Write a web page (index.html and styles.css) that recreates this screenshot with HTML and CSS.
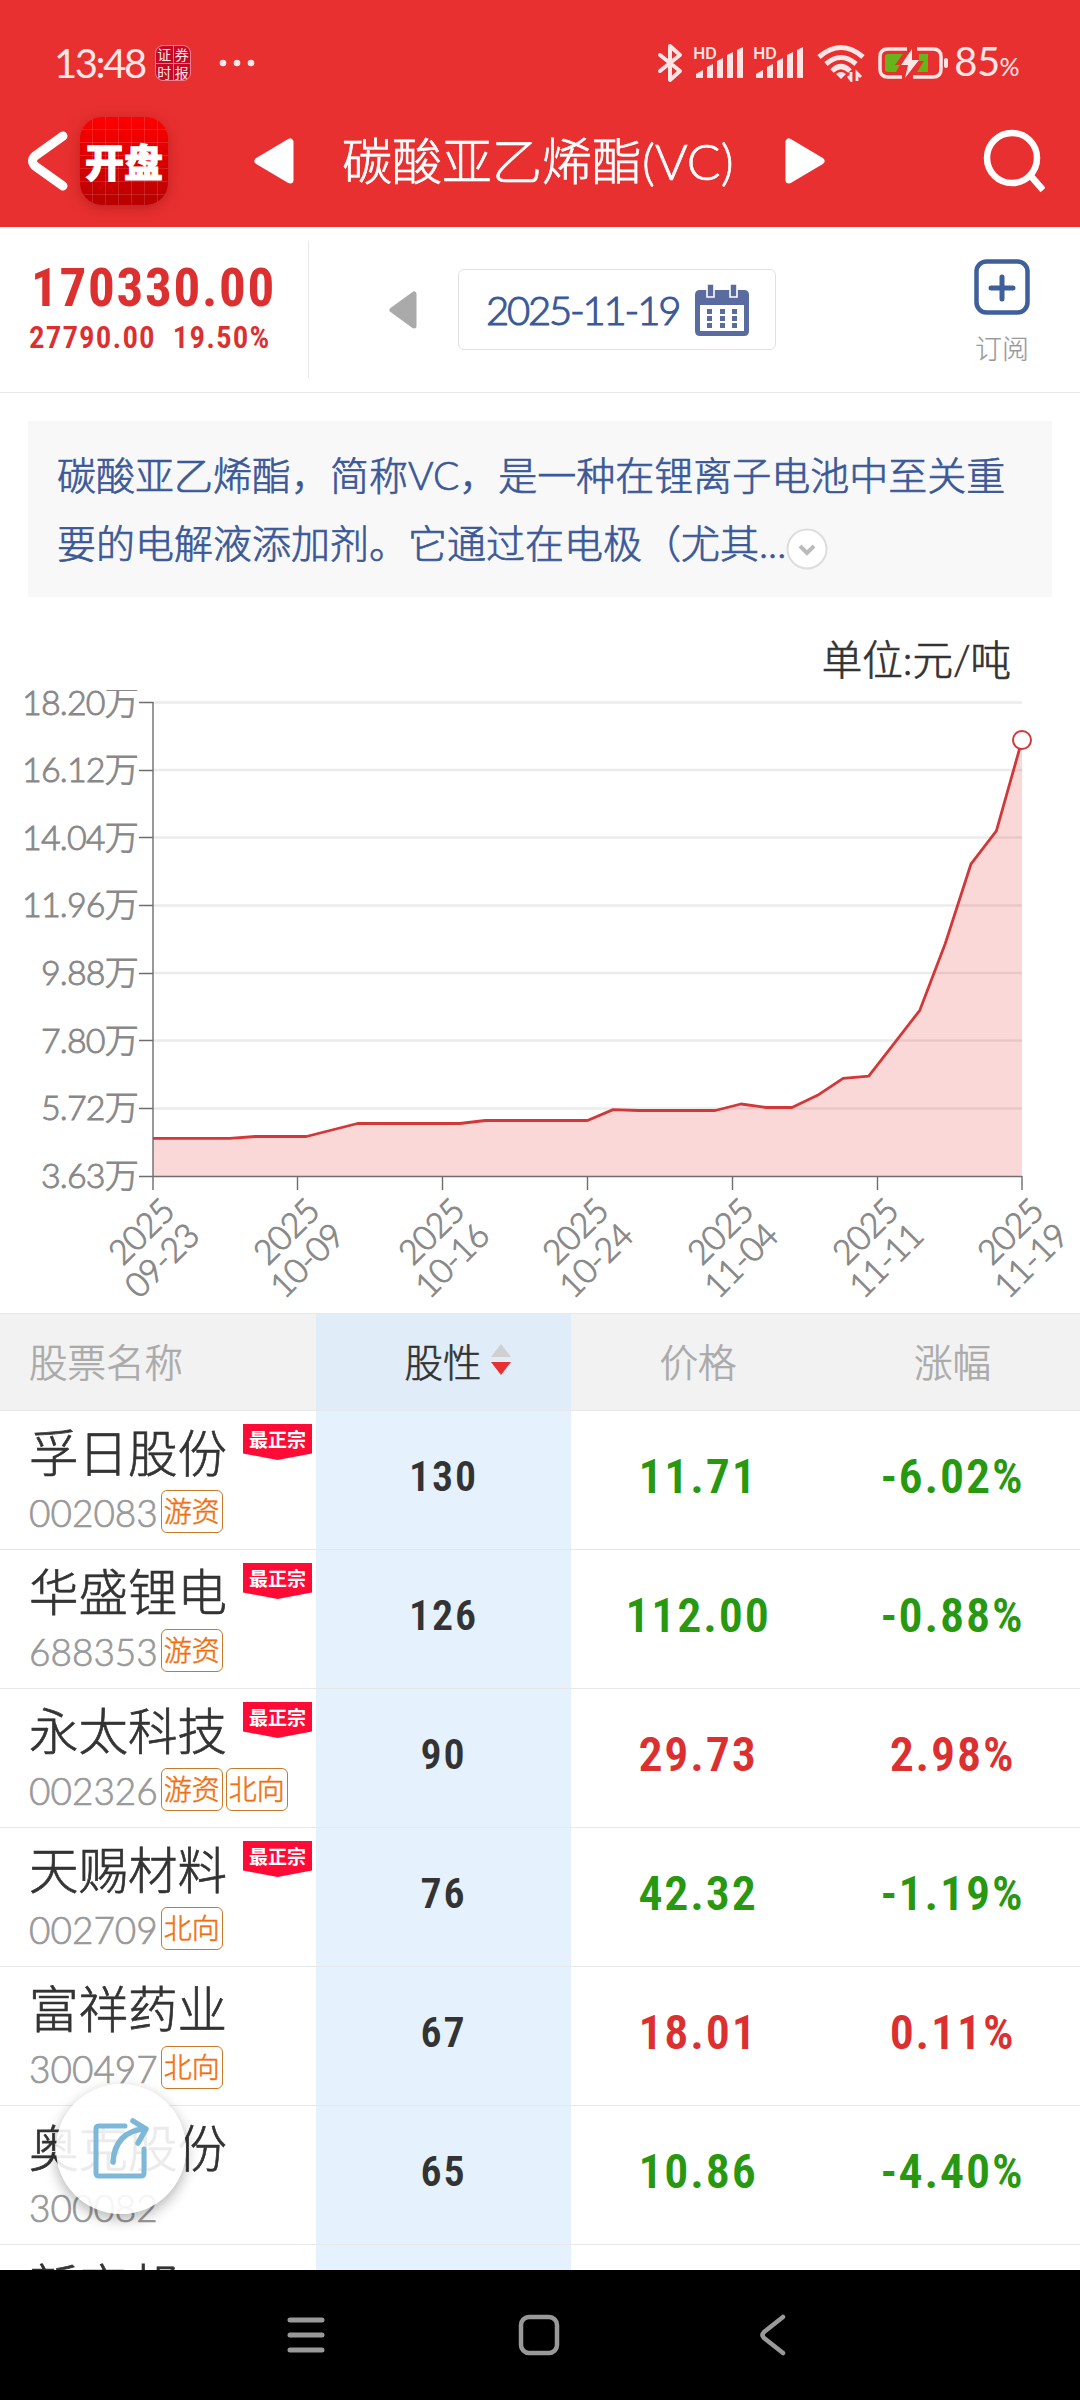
FILE: index.html
```
<!DOCTYPE html>
<html lang="zh-CN">
  <head>
    <meta charset="UTF-8" />
    <title>碳酸亚乙烯酯(VC)</title>
    <link rel="stylesheet" href="styles.css">
  </head>
  <body>
    <div class="screen">
      <header class="top">
        <!-- 状态栏 -->
        <div class="status">
          <span class="clock">13:48</span>
          <div class="news-icon"><span>证</span><span>券</span><span>时</span><span>报</span></div>
          <svg class="dots" width="36" height="8" viewBox="0 0 36 8" fill="#ffe6e6">
            <circle cx="4" cy="4" r="3.3" /><circle cx="18" cy="4" r="3.3" /><circle cx="32" cy="4" r="3.3" />
          </svg>
          <div class="status-right">
            <svg width="26" height="40" viewBox="0 0 26 40" fill="none" stroke="#ffe6e6" stroke-width="4" stroke-linejoin="round" stroke-linecap="round">
              <path d="M3 12L23 28L13 37V3L23 12L3 28" />
            </svg>
            <div class="signal">
              <span>HD</span>
              <svg width="48" height="32" viewBox="0 0 48 32" fill="#ffe6e6">
                <path d="M0 31V27L7 23V31ZM11 31V20L17 17V31ZM21 31V14L27 11V31ZM31 31V8L37 5V31ZM41 31V3L47 0V31Z" />
              </svg>
            </div>
            <div class="signal">
              <span>HD</span>
              <svg width="48" height="32" viewBox="0 0 48 32" fill="#ffe6e6">
                <path d="M0 31V27L7 23V31ZM11 31V20L17 17V31ZM21 31V14L27 11V31ZM31 31V8L37 5V31ZM41 31V3L47 0V31Z" />
              </svg>
            </div>
            <svg class="wifi" width="48" height="38" viewBox="0 0 48 38" fill="none" stroke="#ffe6e6" stroke-width="5">
              <path d="M2 13Q24 -6 46 13M9 20Q24 7 39 20M15 27Q24 18 33 27" />
              <path d="M19 30Q24 26 29 30L24 35Z" fill="#ffe6e6" stroke="none" />
              <path d="M34 28V36L31 32M40 37V29L44 33" stroke-width="2.8" />
            </svg>
            <svg class="battery" width="72" height="34" viewBox="0 0 72 34">
              <path d="M29 3H10Q2 3 2 11V23Q2 31 10 31H24M39 3H55Q63 3 63 11V23Q63 31 55 31H35" fill="none" stroke="#ffe6e6" stroke-width="3.5" />
              <path d="M7 11Q7 8 10 8H25L17 19H22L18 26H10Q7 26 7 23ZM41 8H50V26H39L46 15H41Z" fill="#66b31a" />
              <path d="M34 3L23 19H30L27 32L41 14H34Z" fill="#ffe6e6" />
              <rect x="66" y="12" width="4" height="10" rx="2" fill="#ffe6e6" />
            </svg>
            <span class="percent">85<small>%</small></span>
          </div>
        </div>
        <!-- 标题栏 -->
        <div class="titlebar">
          <svg class="back" width="42" height="62" viewBox="0 0 42 62" fill="none" stroke="#fff" stroke-width="9" stroke-linecap="round" stroke-linejoin="round">
            <path d="M36 6L8 26Q3 31 8 36L36 56" />
          </svg>
          <div class="app-logo">开盘</div>
          <svg class="prev" width="40" height="48" viewBox="0 0 40 48" fill="#fff" stroke="#fff" stroke-width="7" stroke-linejoin="round"><path d="M36 5V43L4 24Z" /></svg>
          <h1>碳酸亚乙烯酯(VC)</h1>
          <svg class="next" width="40" height="48" viewBox="0 0 40 48" fill="#fff" stroke="#fff" stroke-width="7" stroke-linejoin="round"><path d="M4 5V43L36 24Z" /></svg>
          <svg class="search" width="62" height="66" viewBox="0 0 62 66" fill="none" stroke="#fff" stroke-width="6.5">
            <circle cx="29" cy="30" r="25" /><path d="M47 47L60 62" />
          </svg>
        </div>
      </header>

      <main>
        <section class="summary">
          <div class="quote">
            <div class="price">170330.00</div>
            <div class="change"><span>27790.00</span><span>19.50%</span></div>
          </div>
          <svg class="day-prev" width="28" height="38" viewBox="0 0 28 38" fill="#aaa" stroke="#aaa" stroke-width="5" stroke-linejoin="round"><path d="M25 3V35L3 19Z" /></svg>
          <div class="date">
            <span>2025-11-19</span>
            <svg width="54" height="52" viewBox="0 0 54 52" fill="#5a6b9f">
              <path fill-rule="evenodd" d="M5 6H49Q54 6 54 11V47Q54 52 49 52H5Q0 52 0 47V11Q0 6 5 6ZM5 21V47H49V21Z" />
              <path d="M12 0H19V13H12ZM35 0H42V13H35Z" stroke="#fff" stroke-width="1.6" />
              <path d="M12 25h5v5h-5zM25 25h5v5h-5zM37 25h5v5h-5zM12 32h5v5h-5zM25 32h5v5h-5zM37 32h5v5h-5zM12 39h5v5h-5zM25 39h5v5h-5zM37 39h5v5h-5z" />
            </svg>
          </div>
          <div class="subscribe">
            <svg width="56" height="56" viewBox="0 0 56 56" fill="none" stroke="#3f5f9b" stroke-width="4.5" stroke-linecap="round">
              <rect x="2.5" y="2.5" width="51" height="51" rx="10" /><path d="M28 18V40M17 29H39" stroke-width="5" />
            </svg>
            <span>订阅</span>
          </div>
        </section>

        <p class="intro">碳酸亚乙烯酯，简称VC，是一种在锂离子电池中至关重<br />要的电解液添加剂。它通过在电极（尤其...<svg width="42" height="42" viewBox="0 0 42 42" fill="none"><circle cx="21" cy="21" r="19.5" fill="#fff" stroke="#ddd" stroke-width="2" /><path d="M14 18L21 25L28 18" stroke="#bbb" stroke-width="4" /></svg></p>

        <div class="unit">单位:元/吨</div>

        <!-- 价格走势 -->
        <svg class="chart" width="1080" height="623" viewBox="0 690 1080 623">
          <path d="M153 702.5H1022M153 770H1022M153 837.5H1022M153 905.5H1022M153 973H1022M153 1040.5H1022M153 1108.5H1022" stroke="#ebebeb" stroke-width="2.5" />
          <path d="M153 1138.3H229.7L255.2 1136.5H306.4L331.9 1130L357.5 1123.5H459.7L485.3 1120.5H587.5L613.1 1109.6L638.6 1110.5H715.3L740.9 1104L766.4 1107.5H792L817.5 1095.3L843.1 1078.4L868.7 1076.2L894.2 1043.3L919.8 1010.3L945.3 943.5L970.9 864.2L996.4 830.8L1022 740.2V1176H153Z" fill="#e83030" fill-opacity=".19" />
          <path d="M153 702V1190M139 1176.5H1022M139 702.5H153M139 770.5H153M139 837.5H153M139 905.5H153M139 973.5H153M139 1040.5H153M139 1108.5H153M297.5 1176V1190M442.5 1176V1190M587.5 1176V1190M732.5 1176V1190M877.5 1176V1190M1022 1176V1190" stroke="#6e6e6e" stroke-width="1.4" />
          <path d="M153 1138.3H229.7L255.2 1136.5H306.4L331.9 1130L357.5 1123.5H459.7L485.3 1120.5H587.5L613.1 1109.6L638.6 1110.5H715.3L740.9 1104L766.4 1107.5H792L817.5 1095.3L843.1 1078.4L868.7 1076.2L894.2 1043.3L919.8 1010.3L945.3 943.5L970.9 864.2L996.4 830.8L1022 740.2" fill="none" stroke="#d23838" stroke-width="2.8" stroke-linejoin="round" />
          <circle cx="1022" cy="740" r="9" fill="#fff" stroke="#d23838" stroke-width="2" />
          <g class="y-labels">
            <text x="138" y="715">18.20万</text>
            <text x="138" y="782">16.12万</text>
            <text x="138" y="850">14.04万</text>
            <text x="138" y="917">11.96万</text>
            <text x="138" y="985">9.88万</text>
            <text x="138" y="1053">7.80万</text>
            <text x="138" y="1120">5.72万</text>
            <text x="138" y="1188">3.63万</text>
          </g>
          <g class="x-labels">
            <text transform="translate(153 1190) rotate(-45)"><tspan x="0" y="33">2025</tspan><tspan x="0" y="68">09-23</tspan></text>
            <text transform="translate(298 1190) rotate(-45)"><tspan x="0" y="33">2025</tspan><tspan x="0" y="68">10-09</tspan></text>
            <text transform="translate(443 1190) rotate(-45)"><tspan x="0" y="33">2025</tspan><tspan x="0" y="68">10-16</tspan></text>
            <text transform="translate(587 1190) rotate(-45)"><tspan x="0" y="33">2025</tspan><tspan x="0" y="68">10-24</tspan></text>
            <text transform="translate(732 1190) rotate(-45)"><tspan x="0" y="33">2025</tspan><tspan x="0" y="68">11-04</tspan></text>
            <text transform="translate(877 1190) rotate(-45)"><tspan x="0" y="33">2025</tspan><tspan x="0" y="68">11-11</tspan></text>
            <text transform="translate(1022 1190) rotate(-45)"><tspan x="0" y="33">2025</tspan><tspan x="0" y="68">11-19</tspan></text>
          </g>
        </svg>

        <!-- 相关股票 -->
        <div class="table">
          <div class="row head">
            <div class="stock">股票名称</div>
            <div class="nature">股性<svg width="22" height="32" viewBox="0 0 22 32"><path d="M11 0L21 13H1Z" fill="#d0d0d0" /><path d="M1 18H21L11 31Z" fill="#e83030" /></svg></div>
            <div class="value">价格</div>
            <div class="value">涨幅</div>
          </div>
          <div class="row">
            <div class="stock"><div class="name">孚日股份</div><div class="code">002083<i>游资</i></div><b class="badge">最正宗</b></div>
            <div class="nature">130</div>
            <div class="value down">11.71</div>
            <div class="value down">-6.02%</div>
          </div>
          <div class="row">
            <div class="stock"><div class="name">华盛锂电</div><div class="code">688353<i>游资</i></div><b class="badge">最正宗</b></div>
            <div class="nature">126</div>
            <div class="value down">112.00</div>
            <div class="value down">-0.88%</div>
          </div>
          <div class="row">
            <div class="stock"><div class="name">永太科技</div><div class="code">002326<i>游资</i><i>北向</i></div><b class="badge">最正宗</b></div>
            <div class="nature">90</div>
            <div class="value up">29.73</div>
            <div class="value up">2.98%</div>
          </div>
          <div class="row">
            <div class="stock"><div class="name">天赐材料</div><div class="code">002709<i>北向</i></div><b class="badge">最正宗</b></div>
            <div class="nature">76</div>
            <div class="value down">42.32</div>
            <div class="value down">-1.19%</div>
          </div>
          <div class="row">
            <div class="stock"><div class="name">富祥药业</div><div class="code">300497<i>北向</i></div></div>
            <div class="nature">67</div>
            <div class="value up">18.01</div>
            <div class="value up">0.11%</div>
          </div>
          <div class="row">
            <div class="stock"><div class="name">奥克股份</div><div class="code">300082</div></div>
            <div class="nature">65</div>
            <div class="value down">10.86</div>
            <div class="value down">-4.40%</div>
          </div>
          <div class="row">
            <div class="stock"><div class="name">新宙邦</div></div>
            <div class="nature"></div>
            <div class="value"></div>
            <div class="value"></div>
          </div>
        </div>
      </main>

      <!-- 分享悬浮按钮 -->
      <div class="share">
        <svg width="60" height="64" viewBox="0 0 60 64" fill="none" stroke="#7db8d8" stroke-width="5" stroke-linecap="round" stroke-linejoin="round">
          <path d="M34 9H8Q5 9 5 12V56Q5 59 8 59H50Q53 59 53 56V32" />
          <path d="M22 45C23 26 34 13 54 12M42 4L55 12L47 26" stroke-width="5.5" />
        </svg>
      </div>

      <nav class="sysbar">
        <svg width="38" height="40" viewBox="0 0 38 40" stroke="#999" stroke-width="5" stroke-linecap="round"><path d="M3 5H35M3 20H35M3 35H35" /></svg>
        <svg width="42" height="42" viewBox="0 0 42 42" fill="none" stroke="#999" stroke-width="4.5"><rect x="3" y="3" width="36" height="36" rx="8" /></svg>
        <svg width="28" height="42" viewBox="0 0 28 42" fill="none" stroke="#999" stroke-width="4.5" stroke-linecap="round" stroke-linejoin="round"><path d="M24 3L5 18Q2 21 5 24L24 39" /></svg>
      </nav>
    </div>
  </body>
</html>
```
FILE: styles.css
```
* {
  box-sizing: border-box;
}

body {
  margin: 0;
  background: #fff;
  font-family: Lato, "Noto Sans CJK SC", sans-serif;
  font-weight: 300;
  color: #333;
  -webkit-text-stroke: 0.7px;
}

svg {
  display: block;
  flex: none;
}

.screen {
  position: relative;
  display: flex;
  flex-direction: column;
  width: 1080px;
  height: 2400px;
  overflow: hidden;
}

/* 顶部 */
.top {
  flex: none;
  height: 227px;
  background: #e83030;
  color: #fff;
}

.status {
  display: flex;
  align-items: center;
  height: 104px;
  padding: 22px 61px 0 54px;
  color: #ffe6e6;
}

.clock,
.percent {
  font-size: 40px;
  font-weight: 400;
  line-height: 40px;
  -webkit-text-stroke: 0;
}

.clock {
  width: 101px;
  letter-spacing: -2.4px;
}

.news-icon {
  display: grid;
  grid-template-columns: 1fr 1fr;
  gap: 1px;
  width: 36px;
  height: 36px;
  border: 1px solid #e9808f;
  border-radius: 8px;
  background: #e9808f;
  overflow: hidden;
}

.news-icon span {
  background: #c40828;
  font: 400 14px/17px "Noto Sans CJK SC", sans-serif;
  text-align: center;
  -webkit-text-stroke: 0;
}

.dots {
  margin-left: 28px;
}

.status-right {
  display: flex;
  align-items: center;
  margin-left: auto;
}

.signal {
  position: relative;
  width: 49px;
  margin-left: 13px;
}

.signal + .signal {
  margin-left: 11px;
}

.signal span {
  position: absolute;
  left: -3px;
  top: -2px;
  font: 600 16px/16px Inter, sans-serif;
  -webkit-text-stroke: 0;
}

.wifi {
  margin-left: 12px;
}

.battery {
  margin-left: 13px;
}

.percent {
  margin-left: 4px;
  letter-spacing: -0.6px;
}

.percent small {
  font-size: 25px;
}

.titlebar {
  display: flex;
  align-items: center;
  height: 114px;
  padding-left: 27px;
}

.app-logo {
  display: flex;
  align-items: center;
  justify-content: center;
  width: 88px;
  height: 88px;
  margin-left: 11px;
  padding-bottom: 3px;
  border-radius: 22px;
  background:
    repeating-linear-gradient(90deg, transparent 0 12px, rgba(255, 255, 255, 0.13) 12px 13px),
    repeating-linear-gradient(transparent 0 12px, rgba(255, 255, 255, 0.13) 12px 13px),
    linear-gradient(#ff0000, #b60000);
  box-shadow: 0 3px 14px rgba(120, 0, 0, 0.35);
  font: 900 39px/88px "Noto Sans CJK SC", sans-serif;
  -webkit-text-stroke: 1px #fff;
}

.prev {
  margin-left: 86px;
}

.titlebar h1 {
  width: 391px;
  margin: 0 52px 0 48px;
  font-size: 50px;
  font-weight: 300;
  line-height: 60px;
  white-space: nowrap;
}

.search {
  margin-left: 158px;
}

/* 内容 */
main {
  flex: 1;
  min-height: 0;
  overflow: hidden;
}

.summary {
  display: flex;
  align-items: center;
  height: 166px;
  border-bottom: 1px solid #e8e8e8;
}

.quote {
  width: 309px;
  height: 137px;
  padding: 20px 0 0 29px;
  border-right: 1px solid #e8e8e8;
  color: #dc3030;
  font-family: Roboto, sans-serif;
  font-weight: 700;
  font-stretch: 85%;
  white-space: nowrap;
  -webkit-text-stroke: 0;
}

.price {
  padding-left: 2px;
  font-size: 53px;
  line-height: 54px;
  letter-spacing: 1.7px;
}

.change {
  display: flex;
  gap: 17px;
  font-size: 31px;
  font-weight: 600;
  line-height: 46px;
  letter-spacing: 1.1px;
}

.day-prev {
  margin-left: 80px;
}

.date {
  display: flex;
  align-items: center;
  width: 318px;
  height: 81px;
  margin-left: 41px;
  padding-left: 27px;
  border: 1px solid #e2e2e2;
  border-radius: 6px;
  color: #3b5998;
}

.date span {
  width: 209px;
  font-size: 40px;
  letter-spacing: -2.2px;
  -webkit-text-stroke: 1.1px;
}

.subscribe {
  display: flex;
  flex-direction: column;
  align-items: center;
  width: 56px;
  margin-left: 198px;
  padding-top: 5px;
  color: #999;
  font-size: 27px;
  line-height: 34px;
  gap: 17px;
  white-space: nowrap;
  -webkit-text-stroke: 0.2px;
}

.intro {
  height: 176px;
  margin: 28px 28px 0;
  padding: 20px 0 0 29px;
  background: #f8f8f8;
  color: #3b5998;
  font-size: 39px;
  line-height: 68px;
  white-space: nowrap;
}

.intro svg {
  display: inline-block;
  vertical-align: -12px;
}

.unit {
  height: 93px;
  padding: 34px 69px 0 0;
  font-size: 40.5px;
  line-height: 58px;
  text-align: right;
}

.chart text {
  fill: #888;
  stroke: #888;
  stroke-width: 0.9px;
  text-anchor: end;
}

.y-labels {
  font-size: 34px;
  letter-spacing: -0.8px;
}

.x-labels {
  font-size: 34px;
  letter-spacing: -0.8px;
}

/* 表格 */
.row {
  display: grid;
  grid-template-columns: 316px 255px 254px 255px;
  height: 139px;
  border-bottom: 1px solid #e6e8ea;
}

.row > div {
  display: flex;
  align-items: center;
  justify-content: center;
}

.row .nature,
.row .value {
  padding-bottom: 7px;
  font: 600 42px Roboto, sans-serif;
  font-stretch: 85%;
  letter-spacing: 1.8px;
  -webkit-text-stroke: 0;
}

.row .nature {
  background: #e5f2fe;
}

.row .value {
  font-size: 48px;
}

.row > .stock {
  position: relative;
  flex-direction: column;
  align-items: flex-start;
  justify-content: flex-start;
  padding-left: 29px;
}

.name {
  margin-top: 11px;
  font-size: 49.5px;
  line-height: 62px;
}

.code {
  display: flex;
  gap: 3px;
  color: #999;
  font-size: 37px;
  line-height: 58px;
}

.code i {
  width: 62px;
  height: 43px;
  margin-top: 6px;
  border: 1px solid #c87a2a;
  border-radius: 6px;
  color: #f07010;
  font-size: 28px;
  font-style: normal;
  line-height: 40px;
  text-align: center;
  -webkit-text-stroke: 0.5px;
}

.badge {
  position: absolute;
  left: 243px;
  top: 13px;
  width: 69px;
  height: 36px;
  background: #ff0b35;
  clip-path: polygon(0 0, 100% 0, 100% 82%, 50% 100%, 0 82%);
  color: #fff;
  font-size: 19px;
  font-weight: 700;
  line-height: 31px;
  text-align: center;
  -webkit-text-stroke: 0;
}

.row.head {
  height: 98px;
  border-top: 1px solid #e6e8ea;
  background: #f2f2f2;
}

.row.head > div {
  padding-bottom: 5px;
  color: #aaa;
  font: 300 38.5px Lato, "Noto Sans CJK SC", sans-serif;
  letter-spacing: 0;
  -webkit-text-stroke: 0.6px;
}

.row.head > .stock {
  justify-content: center;
}

.row.head > .nature {
  gap: 8px;
  padding-left: 29px;
  background: #e0ecf7;
  color: #333;
}

.row > .up {
  color: #dc3030;
}

.row > .down {
  color: #289810;
}

.share {
  position: absolute;
  left: 56px;
  top: 2084px;
  display: flex;
  align-items: center;
  justify-content: center;
  width: 130px;
  height: 130px;
  border-radius: 50%;
  background: rgba(255, 255, 255, 0.9);
  box-shadow: 0 5px 14px rgba(0, 0, 0, 0.3);
}

/* 系统导航 */
.sysbar {
  display: flex;
  flex: none;
  align-items: center;
  gap: 193px;
  height: 130px;
  padding-left: 287px;
  background: #000;
}

.sysbar svg:last-child {
  margin-left: 6px;
}
```
